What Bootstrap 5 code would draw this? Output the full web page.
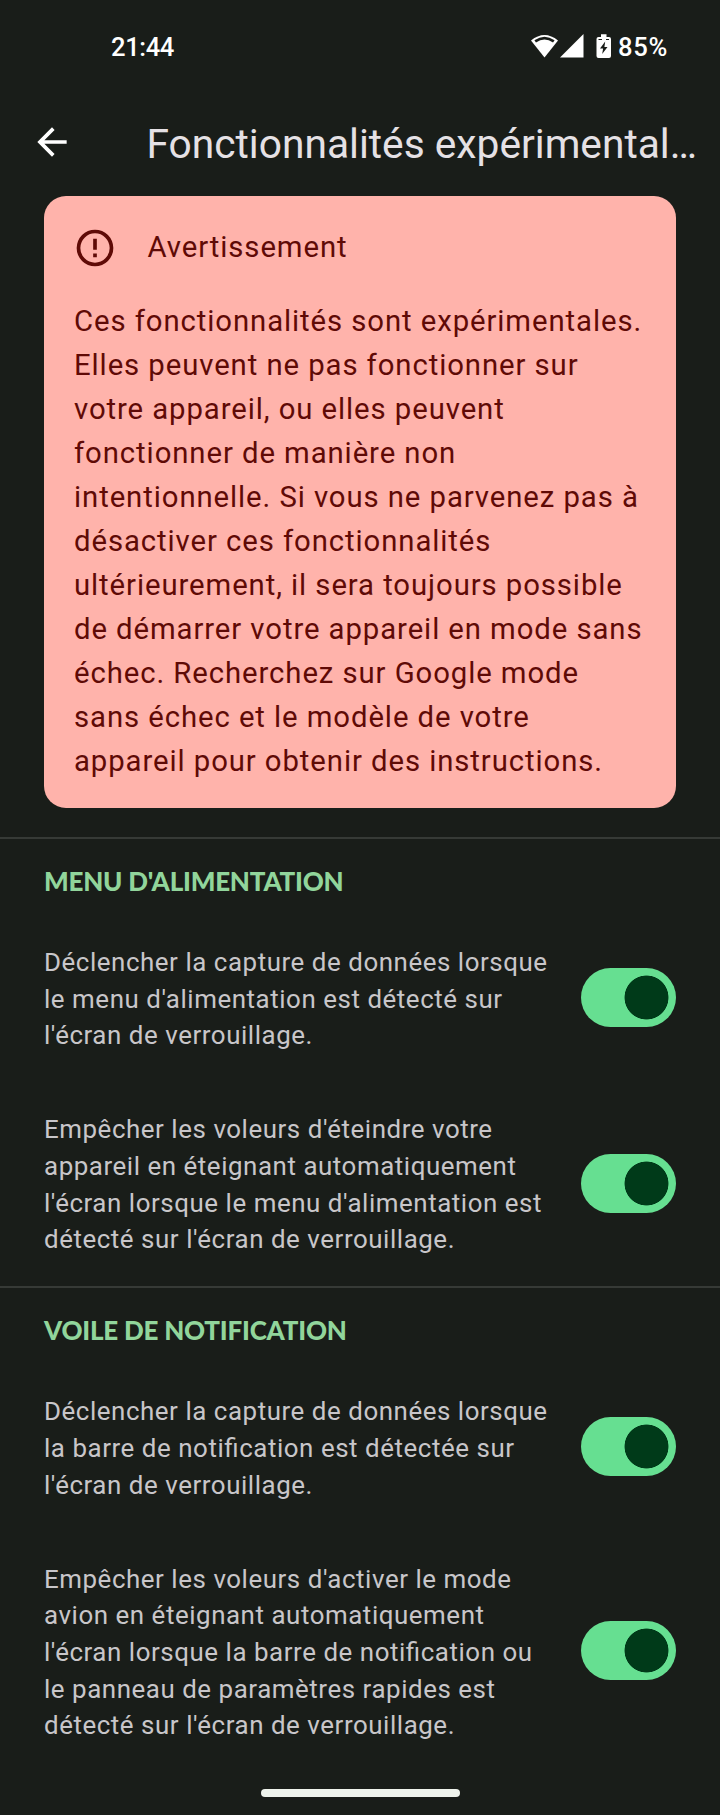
<!DOCTYPE html>
<html lang="fr">
<head>
<meta charset="utf-8">
<meta name="viewport" content="width=device-width, initial-scale=1">
<title>Fonctionnalités expérimentales</title>
<link href="https://cdn.jsdelivr.net/npm/bootstrap@5.3.0/dist/css/bootstrap.min.css" rel="stylesheet">
<style>
  body { background: #191d19; color: #c8c6c9; font-family: Roboto, sans-serif; }
  .screen { width: 720px; height: 1815px; }
  .status { height: 94px; padding: 0 52px 0 111px; font-size: 25.6px; font-weight: 500; color: #fff; line-height: 94px; }
  .clock { letter-spacing: -.4px; }
  .level { letter-spacing: .7px; }
  .topbar { height: 102px; padding: 0 16px 3px 29.5px; }
  .topbar svg { margin-bottom: 3px; }
  .topbar h1 { margin-left: 73px; font-size: 40.7px; line-height: 52px; font-weight: 400; color: #e5e1e5; white-space: nowrap; }
  .warning { margin: 0 44px; height: 612px; border: 0; border-radius: 22px; background: #ffb3ab; color: #5f0a06; font-size: 29.3px; line-height: 44px; letter-spacing: .92px; padding: 29px 30px 0 30px; }
  .warning-head { height: 44px; gap: 30.5px; margin-bottom: 30px; }
  .warning-head svg { margin: 1px 0 0 -1px; }
  .group { border-top: 2px solid #363a36; height: 449.3px; }
  .group h2 { margin: 0; height: 76.5px; padding: 26px 44px 0; font: 900 26px/32px Lato, sans-serif; color: #91d59b; letter-spacing: -.22px; }
  .pref { padding: 28.4px 44px 29.1px; font-size: 25.9px; line-height: 36.65px; letter-spacing: .55px; font-feature-settings: "liga" 1; }
  .pref p { width: 510px; }
  .pref .form-check-input { width: 95.3px; height: 59px; margin: 0 0 3px; border: 0; border-radius: 30px; box-shadow: none; background: #66df91 radial-gradient(circle at 65.5px 50%, #003a19 21.6px, transparent 22.3px) no-repeat; }
  .home-pill { width: 199px; height: 8px; background: #eef3ec; margin-top: 53.4px; }
</style>
</head>
<body>
<main class="screen d-flex flex-column overflow-hidden">
  <div class="status d-flex justify-content-between flex-shrink-0">
    <span class="clock">21:44</span>
    <span class="d-flex align-items-center">
      <svg style="margin-right:7px" width="80" height="26" viewBox="0 0 80 26" fill="#fff">
        <path d="M0 6.5Q13.5-4.5 27 6.5L13.5 23.5Z"/>
        <path d="M4.2 7.3Q13.5.8 22.8 7.3" fill="none" stroke="#191d19" stroke-width="2.7"/>
        <path d="M29 23.5 52.5 0V23.5Z"/>
        <path d="M70 .3h5.500V3H78a2 2 0 0 1 2 2v17a2 2 0 0 1-2 2H67.500a2 2 0 0 1-2-2V5a2 2 0 0 1 2-2H70z"/>
        <path d="M74.200 7.500 69 14.500h3.100L71.200 20l5.300-7h-3.100z" fill="#191d19"/>
        <path d="M67.500 5.500h3.500M75 5.500h3" stroke="#191d19" stroke-width="1"/>
      </svg>
      <span class="level">85%</span>
    </span>
  </div>
  <header class="topbar d-flex align-items-center flex-shrink-0">
    <svg class="flex-shrink-0" width="44" height="44" viewBox="0 0 24 24" fill="#fff"><path d="M20 11H7.830l5.590-5.590L12 4l-8 8 8 8 1.410-1.410L7.830 13H20z"/></svg>
    <h1 class="mb-0">Fonctionnalités expérimental…</h1>
  </header>
  <section class="card warning flex-shrink-0">
    <div class="warning-head d-flex align-items-center">
      <svg width="44" height="44" viewBox="0 0 24 24" fill="currentColor"><path d="M11 15h2v2h-2zM11 7h2v6h-2zM12 2a10 10 0 1 0 0 20 10 10 0 0 0 0-20m0 18a8 8 0 1 1 0-16 8 8 0 0 1 0 16"/></svg>
      <span>Avertissement</span>
    </div>
    <p class="mb-0">Ces fonctionnalités sont expérimentales. Elles peuvent ne pas fonctionner sur votre appareil, ou elles peuvent fonctionner de manière non intentionnelle. Si vous ne parvenez pas à désactiver ces fonctionnalités ultérieurement, il sera toujours possible de démarrer votre appareil en mode sans échec. Recherchez sur Google mode sans échec et le modèle de votre appareil pour obtenir des instructions.</p>
  </section>
  <section class="group flex-shrink-0" style="margin-top:29px">
    <h2>MENU D'ALIMENTATION</h2>
    <label class="pref d-flex align-items-center justify-content-between">
      <p class="mb-0">Déclencher la capture de données lorsque le menu d'alimentation est détecté sur l'écran de verrouillage.</p>
      <input class="form-check-input flex-shrink-0" type="checkbox" role="switch" checked>
    </label>
    <label class="pref d-flex align-items-center justify-content-between">
      <p class="mb-0">Empêcher les voleurs d'éteindre votre appareil en éteignant automatiquement l'écran lorsque le menu d'alimentation est détecté sur l'écran de verrouillage.</p>
      <input class="form-check-input flex-shrink-0" type="checkbox" role="switch" checked>
    </label>
  </section>
  <section class="group flex-shrink-0">
    <h2>VOILE DE NOTIFICATION</h2>
    <label class="pref d-flex align-items-center justify-content-between">
      <p class="mb-0">Déclencher la capture de données lorsque la barre de notification est détectée sur l'écran de verrouillage.</p>
      <input class="form-check-input flex-shrink-0" type="checkbox" role="switch" checked>
    </label>
    <label class="pref d-flex align-items-center justify-content-between">
      <p class="mb-0">Empêcher les voleurs d'activer le mode avion en éteignant automatiquement l'écran lorsque la barre de notification ou le panneau de paramètres rapides est détecté sur l'écran de verrouillage.</p>
      <input class="form-check-input flex-shrink-0" type="checkbox" role="switch" checked>
    </label>
  </section>
  <div class="home-pill rounded-pill mx-auto flex-shrink-0"></div>
</main>
<script src="https://cdn.jsdelivr.net/npm/bootstrap@5.3.0/dist/js/bootstrap.bundle.min.js"></script>
</body>
</html>
